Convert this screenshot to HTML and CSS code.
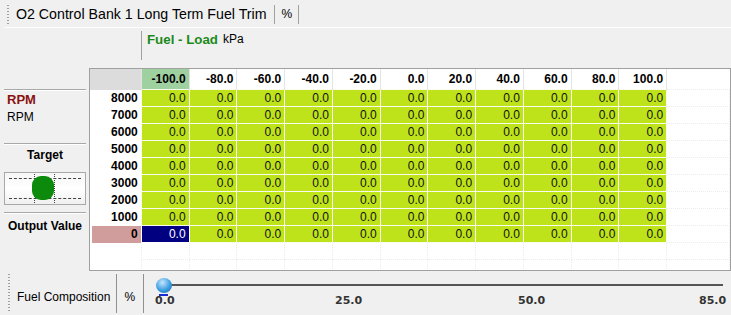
FILE: index.html
```html
<!DOCTYPE html>
<html>
<head>
<meta charset="utf-8">
<link rel="stylesheet" href="styles.css">
</head>
<body>
<div class="titlebar">
  <span class="grip"></span>
  <span class="title">O2 Control Bank 1 Long Term Fuel Trim</span>
  <span class="unit">%</span>
</div>
<div class="xaxis">
  <div class="xaxis-label"><span class="xname">Fuel - Load</span><span class="xunit">kPa</span></div>
</div>
<div class="main">
  <div class="side">
    <div class="side-sec yaxis">
      <div class="yname">RPM</div>
      <div class="yunit">RPM</div>
    </div>
    <div class="side-sec target">
      <div class="side-title">Target</div>
      <div class="target-box">
        <span class="hline h1"></span>
        <span class="hline h2"></span>
        <span class="vline v1"></span>
        <span class="vline v2"></span>
        <span class="dot"></span>
      </div>
    </div>
    <div class="side-sec output">
      <div class="side-title">Output Value</div>
    </div>
  </div>
  <div class="grid-wrap">
    <table class="grid">
      <thead>
        <tr>
          <th class="corner"></th>
          <th class="hl">-100.0</th><th>-80.0</th><th>-60.0</th><th>-40.0</th><th>-20.0</th><th>0.0</th><th>20.0</th><th>40.0</th><th>60.0</th><th>80.0</th><th>100.0</th><th class="blank"></th>
        </tr>
      </thead>
      <tbody id="body"></tbody>
    </table>
  </div>
</div>
<div class="bottombar">
  <span class="grip grip2"></span>
  <span class="bname">Fuel Composition</span>
  <span class="bunit">%</span>
  <div class="slider">
    <div class="track"></div>
    <div class="thumb"></div>
    <div class="thumb-mark"></div>
    <span class="tick t0">0.0</span>
    <span class="tick t1">25.0</span>
    <span class="tick t2">50.0</span>
    <span class="tick t3">85.0</span>
  </div>
</div>
<script>
var rows=["8000","7000","6000","5000","4000","3000","2000","1000","0"];
var tb=document.getElementById("body");
var html="";
rows.forEach(function(r){
  var last=r==="0";
  html+='<tr><th class="rl'+(last?' zero':'')+'">'+r+'</th>';
  for(var i=0;i<11;i++){
    html+='<td class="v'+(last&&i===0?' sel':'')+'">0.0</td>';
  }
  html+='<td class="e"></td></tr>';
});
for(var k=0;k<2;k++){
  html+='<tr class="empty"><th class="rl"></th>';
  for(var i=0;i<12;i++) html+='<td class="e"></td>';
  html+='</tr>';
}
tb.innerHTML=html;
</script>
</body>
</html>
```
FILE: styles.css
```css
html, body {
  margin: 0;
  padding: 0;
  background: #f0f0f0;
  font-family: "Liberation Sans", Arial, sans-serif;
  color: #000;
  width: 731px;
  height: 315px;
  overflow: hidden;
}
.titlebar {
  height: 28px;
  display: flex;
  align-items: center;
  border-bottom: 1px solid #ffffff;
  margin-left: 4px;
  font-size: 14.2px;
  padding-top: 2px;
  box-sizing: border-box;
}
.grip {
  width: 2px;
  height: 20px;
  margin-left: 3px;
  background-image: linear-gradient(#a0a0a0 50%, transparent 50%);
  background-size: 2px 3px;
}
.title {
  margin-left: 7px;
  padding-right: 7px;
  border-right: 1px solid #a0a0a0;
  line-height: 19px;
}
.unit {
  padding: 0 6px 0 7px;
  border-right: 1px solid #a0a0a0;
  line-height: 19px;
  font-size: 12px;
}
.xaxis {
  height: 37px;
  padding-left: 141px;
}
.xaxis-label {
  border-left: 1px solid #a0a0a0;
  height: 29px;
  margin-top: 3px;
  padding-left: 5px;
  display: flex;
  align-items: flex-start;
}
.xname {
  color: #1b8a1b;
  font-weight: bold;
  font-size: 13.3px;
  margin-top: 1px;
}
.xunit {
  font-size: 12px;
  margin-left: 5px;
  margin-top: 1px;
}
.main {
  display: flex;
  height: 203px;
}
.side {
  width: 89px;
  display: flex;
  flex-direction: column;
  padding-top: 21px;
}
.side-sec {
  margin: 0 3px 0 4px;
  border-top: 1px solid #a8a8a8;
  box-shadow: inset 0 1px 0 #ffffff;
  padding-top: 1px;
}
.yaxis {
  height: 52px;
  padding-left: 3px;
}
.yname {
  color: #8b1010;
  font-weight: bold;
  font-size: 13px;
  margin-top: 1px;
}
.yunit {
  font-size: 12px;
  margin-top: 3px;
}
.target {
  height: 67px;
}
.side-title {
  font-weight: bold;
  font-size: 12px;
  text-align: center;
  margin-top: 3px;
}
.output .side-title {
  margin-top: 5px;
}
.target-box {
  position: relative;
  height: 31px;
  margin-top: 10px;
  border: 1px solid #a8a8a8;
  background: linear-gradient(#f6f6f6, #ffffff 50%, #f0f0f0);
}
.hline {
  position: absolute;
  left: 4px;
  right: 4px;
  height: 0;
  border-top: 1px dashed #404040;
}
.h1 { top: 5px; }
.h2 { top: 25px; }
.vline {
  position: absolute;
  top: 1px;
  bottom: 1px;
  width: 0;
  border-left: 1px dotted #404040;
}
.v1 { left: 29px; }
.v2 { left: 49px; }
.dot {
  position: absolute;
  left: 27px;
  top: 3px;
  width: 22px;
  height: 24px;
  border-radius: 9px;
  background: #0b8a0b;
}
.grid-wrap {
  width: 640px;
  height: 201px;
  border: 1px solid #a0a0a0;
  background: #fff;
  overflow: hidden;
}
.grid {
  border-collapse: collapse;
  table-layout: fixed;
  font-size: 12px;
}
.grid th, .grid td {
  padding: 0 3px 0 0;
  text-align: right;
  white-space: nowrap;
  overflow: hidden;
}
.grid thead th {
  width: 44px;
  height: 20px;
  font-weight: bold;
  border-left: 1px solid #e4e4e4;
}
.grid thead th.corner {
  width: 48px;
  background: #dcdcdc;
  border-left: none;
}
.grid thead th.hl {
  background: #9fd0a0;
}
.grid thead th.blank {
  width: 60px;
}
.grid th.rl {
  width: 48px;
  height: 16px;
  font-weight: bold;
  border-left: none;
}
.grid th.rl.zero {
  background: #d09c9c;
  box-shadow: inset 2px 0 0 #ffffff;
}
.grid td.v {
  background: #bfe31a;
  height: 16px;
  border: 1px dotted #f4f8e0;
  color: #111;
}
.grid td.v.sel {
  background: #000080;
  color: #fff;
  border: 1px dotted #fff;
}
.grid td.e {
  height: 16px;
  border: 1px dotted #ececec;
}
.grid tr.empty th.rl {
  border: none;
}
.bottombar {
  height: 46px;
  display: flex;
  align-items: flex-start;
  font-size: 12px;
}
.grip2 {
  height: 38px;
  margin-left: 8px;
  margin-top: 3px;
}
.bname {
  margin-left: 7px;
  margin-top: 3px;
  height: 39px;
  box-sizing: border-box;
  padding-right: 6px;
  padding-top: 16px;
  border-right: 1px solid #909090;
}
.bunit {
  margin-top: 3px;
  height: 39px;
  box-sizing: border-box;
  padding: 16px 8px 0 7px;
  border-right: 1px solid #909090;
}
.slider {
  position: relative;
  flex: 1;
  height: 46px;
}
.track {
  position: absolute;
  left: 17px;
  right: 8px;
  top: 13px;
  height: 2px;
  background: #555;
}
.thumb {
  position: absolute;
  left: 12px;
  top: 7px;
  width: 16px;
  height: 15px;
  border-radius: 50%;
  background: radial-gradient(circle at 40% 30%, #c4e6ff, #3c9de0 55%, #1866ae);
}
.thumb-mark {
  position: absolute;
  left: 15px;
  top: 23px;
  width: 9px;
  height: 2px;
  background: #1a2bd0;
}
.tick {
  position: absolute;
  top: 23px;
  font-family: "DejaVu Sans", Verdana, sans-serif;
  font-weight: bold;
  font-size: 11px;
  color: #333;
}
.t0 { left: 11px; }
.t1 { left: 191px; }
.t2 { left: 374px; }
.t3 { left: 555px; }
```
